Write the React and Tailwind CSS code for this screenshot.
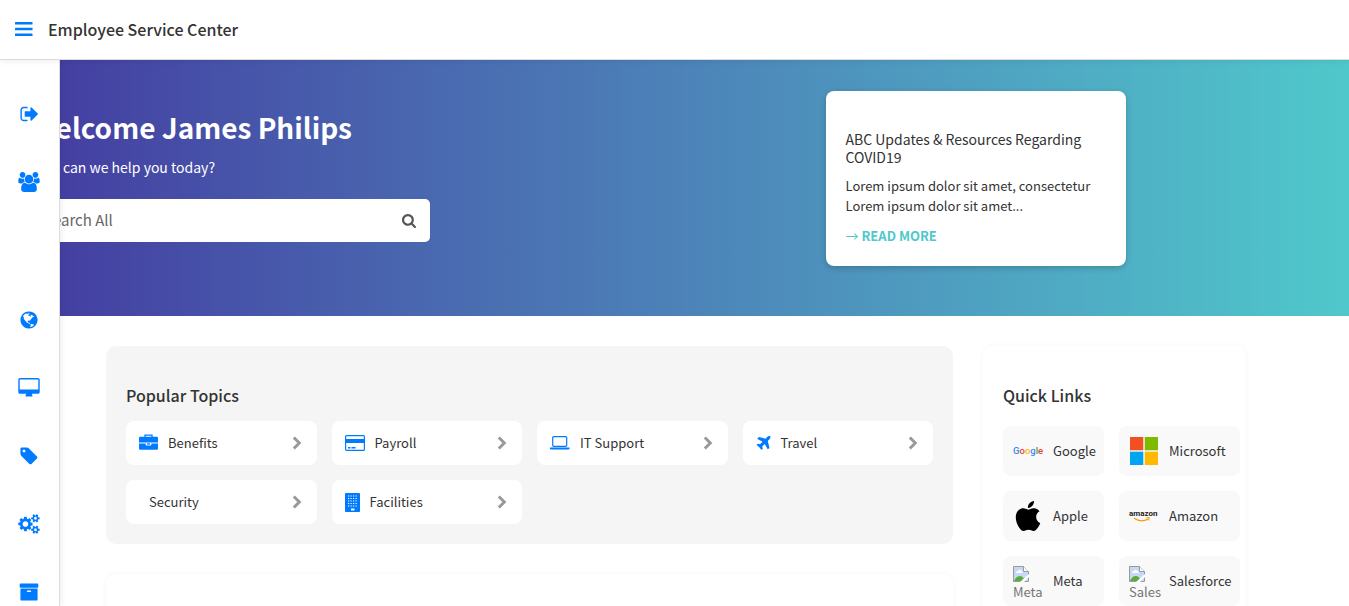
const F = {
  signOut: ["0 0 1664 1792", "M704 1440q0 4 1 20t.5 26.5-3 23.5-10 19.5-20.5 6.5h-320q-119 0-203.5-84.5t-84.5-203.5v-704q0-119 84.5-203.5t203.5-84.5h320q13 0 22.5 9.5t9.5 22.5q0 4 1 20t.5 26.5-3 23.5-10 19.5-20.5 6.5h-320q-66 0-113 47t-47 113v704q0 66 47 113t113 47h312l11.5 1 11.5 3 8 5.5 7 9 2 13.5zm928-544q0 26-19 45l-544 544q-19 19-45 19t-45-19-19-45v-288h-448q-26 0-45-19t-19-45v-384q0-26 19-45t45-19h448v-288q0-26 19-45t45-19 45 19l544 544q19 19 19 45z"],
  users: ["0 0 1920 1792", "M593 896q-162 5-265 128h-134q-82 0-138-40.5t-56-118.5q0-353 124-353 6 0 43.5 21t97.5 42.5 119 21.5q67 0 133-23-5 37-5 66 0 139 81 256zm1071 637q0 120-73 189.5t-194 69.5h-874q-121 0-194-69.5t-73-189.5q0-53 3.5-103.5t14-109 26.5-108.5 43-97.5 62-81 85.5-53.5 111.5-20q10 0 43 21.5t73 48 107 48 135 21.5 135-21.5 107-48 73-48 43-21.5q61 0 111.5 20t85.5 53.5 62 81 43 97.5 26.5 108.5 14 109 3.5 103.5zm-1024-1277q0 106-75 181t-181 75-181-75-75-181 75-181 181-75 181 75 75 181zm704 384q0 159-112.5 271.5t-271.5 112.5-271.5-112.5-112.5-271.5 112.5-271.5 271.5-112.5 271.5 112.5 112.5 271.5zm576 225q0 78-56 118.5t-138 40.5h-134q-103-123-265-128 81-117 81-256 0-29-5-66 66 23 133 23 59 0 119-21.5t97.5-42.5 43.5-21q124 0 124 353zm-128-609q0 106-75 181t-181 75-181-75-75-181 75-181 181-75 181 75 75 181z"],
  globe: ["128 0 1536 1792", "M896 128q209 0 385.5 103t279.5 279.5 103 385.5-103 385.5-279.5 279.5-385.5 103-385.5-103-279.5-279.5-103-385.5 103-385.5 279.5-279.5 385.5-103zm274 521q-2 1-9.5 9.5t-13.5 9.5q2 0 4.5-5t5-11 3.5-7q6-7 22-15 14-6 52-12 34-8 51 11-2-2 9.5-13t14.5-12q3-2 15-4.5t15-7.5l2-22q-12 1-17.5-7t-6.5-21q0 2-6 8 0-7-4.5-8t-11.5 1-9 1q-10-3-15-7.5t-8-16.5-4-15q-2-5-9.5-11t-9.5-10q-1-2-2.5-5.5t-3-6.5-4-5.5-5.5-2.5-7 5-7.5 10-4.5 5q-3-2-6-1.5t-4.5 1-4.5 3-5 3.5q-3 2-8.5 3t-8.5 2q15-5-1-11-10-4-16-3 9-4 7.5-12t-8.5-14h5q-1-4-8.5-8.5t-17.5-8.5-13-6q-8-5-34-9.5t-33-.5q-5 6-4.5 10.5t4 14 3.5 12.5q1 6-5.5 13t-6.5 12q0 7 14 15.5t10 21.5q-3 8-16 16t-16 12q-5 8-1.5 18.5t10.5 16.5q2 2 1.5 4t-3.5 4.5-5.5 4-6.5 3.5l-3 2q-11 5-20.5-6t-13.5-26q-7-25-16-30-23-8-29 1-5-13-41-26-25-9-58-4 6-1 0-15-7-15-19-12 3-6 4-17.5t1-13.5q3-13 12-23 1-1 7-8.5t9.5-13.5.5-6q35 4 50-11 5-5 11.5-17t10.5-17q9-6 14-5.5t14.5 5.5 14.5 5q14 1 15.5-11t-7.5-20q12 1 3-17-4-7-8-9-12-4-27 5-8 4 2 8-1-1-9.5 10.5t-16.5 17.5-16-5q-1-1-5.5-13.5t-9.5-13.5q-8 0-16 15 3-8-11-15t-24-8q19-12-8-27-7-4-20.5-5t-19.5 4q-5 7-5.5 11.5t5 8 10.5 5.5 11.5 4 8.5 3q14 10 8 14-2 1-8.5 3.5t-11.5 4.5-6 4q-3 4 0 14t-2 14q-5-5-9-17.5t-7-16.5q7 9-25 6l-10-1q-4 0-16 2t-20.5 1-13.5-8q-4-8 0-20 1-4 4-2-4-3-11-9.5t-10-8.5q-46 15-94 41 6 1 12-1 5-2 13-6.5t10-5.5q34-14 42-7l5-5q14 16 20 25-7-4-30-1-20 6-22 12 7 12 5 18-4-3-11.5-10t-14.5-11-15-5q-16 0-22 1-146 80-235 222 7 7 12 8 4 1 5 9t2.5 11 11.5-3q9 8 3 19 1-1 44 27 19 17 21 21 3 11-10 18-1-2-9-9t-9-4q-3 5 .5 18.5t10.5 12.5q-7 0-9.5 16t-2.5 35.5-1 23.5l2 1q-3 12 5.5 34.5t21.5 19.5q-13 3 20 43 6 8 8 9 3 2 12 7.5t15 10 10 10.5q4 5 10 22.5t14 23.5q-2 6 9.5 20t10.5 23q-1 0-2.5 1t-2.5 1q3 7 15.5 14t15.5 13q1 3 2 10t3 11 8 2q2-20-24-62-15-25-17-29-3-5-5.5-15.5t-4.5-14.5q2 0 6 1.5t8.5 3.5 7.5 4 2 3q-3 7 2 17.5t12 18.5 17 19 12 13q6 6 14 19.5t0 13.5q9 0 20 10.5t17 19.5q5 8 8 26t5 24q2 7 8.5 13.5t12.5 9.5l16 8 13 7q5 2 18.5 10.5t21.5 11.5q10 4 16 4t14.5-2.5 13.5-3.5q15-2 29 15t21 21q36 19 55 11-2 1 .5 7.5t8 15.5 9 14.5 5.5 8.5q5 6 18 15t18 15q6-4 7-9-3 8 7 20t18 10q14-3 14-32-31 15-49-18 0-1-2.5-5.5t-4-8.5-2.5-8.5 0-7.5 5-3q9 0 10-3.5t-2-12.5-4-13q-1-8-11-20t-12-15q-5 9-16 8t-16-9q0 1-1.5 5.5t-1.5 6.5q-13 0-15-1 1-3 2.5-17.5t3.5-22.5q1-4 5.5-12t7.5-14.5 4-12.5-4.5-9.5-17.5-2.5q-19 1-26 20-1 3-3 10.5t-5 11.5-9 7q-7 3-24 2t-24-5q-13-8-22.5-29t-9.5-37q0-10 2.5-26.5t3-25-5.5-24.5q3-2 9-9.5t10-10.5q2-1 4.5-1.5t4.5 0 4-1.5 3-6q-1-1-4-3-3-3-4-3 7 3 28.5-1.5t27.5 1.5q15 11 22-2 0-1-2.5-9.5t-.5-13.5q5 27 29 9 3 3 15.5 5t17.5 5q3 2 7 5.5t5.5 4.5 5-.5 8.5-6.5q10 14 12 24 11 40 19 44 7 3 11 2t4.5-9.5 0-14-1.5-12.5l-1-8v-18l-1-8q-15-3-18.5-12t1.5-18.5 15-18.5q1-1 8-3.5t15.5-6.5 12.5-8q21-19 15-35 7 0 11-9-1 0-5-3t-7.5-5-4.5-2q9-5 2-16 5-3 7.5-11t7.5-10q9 12 21 2 7-8 1-16 5-7 20.5-10.5t18.5-9.5q7 2 8-2t1-12 3-12q4-5 15-9t13-5l17-11q3-4 0-4 18 2 31-11 10-11-6-20 3-6-3-9.5t-15-5.5q3-1 11.5-.5t10.5-1.5q15-10-7-16-17-5-43 12zm-163 877q206-36 351-189-3-3-12.5-4.5t-12.5-3.5q-18-7-24-8 1-7-2.5-13t-8-9-12.5-8-11-7q-2-2-7-6t-7-5.5-7.5-4.5-8.5-2-10 1l-3 1q-3 1-5.5 2.5t-5.5 3-4 3 0 2.5q-21-17-36-22-5-1-11-5.5t-10.5-7-10-1.5-11.5 7q-5 5-6 15t-2 13q-7-5 0-17.5t2-18.5q-3-6-10.5-4.5t-12 4.5-11.5 8.5-9 6.5-8.5 5.5-8.5 7.5q-3 4-6 12t-5 11q-2-4-11.5-6.5t-9.5-5.5q2 10 4 35t5 38q7 31-12 48-27 25-29 40-4 22 12 26 0 7-8 20.5t-7 21.5q0 6 2 16z"],
  desktop: ["-64 0 1920 1792", "M1728 992v-832q0-13-9.5-22.5t-22.5-9.5h-1600q-13 0-22.5 9.5t-9.5 22.5v832q0 13 9.5 22.5t22.5 9.5h1600q13 0 22.5-9.5t9.5-22.5zm128-832v1088q0 66-47 113t-113 47h-544q0 37 16 77.5t32 71 16 43.5q0 26-19 45t-45 19h-512q-26 0-45-19t-19-45q0-14 16-44t32-70 16-78h-544q-66 0-113-47t-47-113v-1088q0-66 47-113t113-47h1600q66 0 113 47t47 113z"],
  tag: ["128 0 1536 1792", "M576 448q0-53-37.5-90.5t-90.5-37.5-90.5 37.5-37.5 90.5 37.5 90.5 90.5 37.5 90.5-37.5 37.5-90.5zm1067 576q0 53-37 90l-491 492q-39 37-91 37-53 0-90-37l-715-716q-38-37-64.5-101t-26.5-117v-416q0-52 38-90t90-38h416q53 0 117 26.5t102 64.5l715 714q37 39 37 91z"],
  cogs: ["-64 0 1920 1792", "M832 896q0-106-75-181t-181-75-181 75-75 181 75 181 181 75 181-75 75-181zm768 512q0-52-38-90t-90-38-90 38-38 90q0 53 37.5 90.5t90.5 37.5 90.5-37.5 37.5-90.5zm0-1024q0-52-38-90t-90-38-90 38-38 90q0 53 37.5 90.5t90.5 37.5 90.5-37.5 37.5-90.5zm-384 421v185q0 10-7 19.5t-16 10.5l-155 24q-11 35-32 76 34 48 90 115 7 11 7 20 0 12-7 19-23 30-82.5 89.5t-78.5 59.5q-11 0-21-7l-115-90q-37 19-77 31-11 108-23 155-7 24-30 24h-186q-11 0-20-7.5t-10-17.5l-23-153q-34-10-75-31l-118 89q-7 7-20 7-11 0-21-8-144-133-144-160 0-9 7-19 10-14 41-53t47-61q-23-44-35-82l-152-24q-10-1-17-9.5t-7-19.5v-185q0-10 7-19.5t16-10.5l155-24q11-35 32-76-34-48-90-115-7-11-7-20 0-12 7-20 22-30 82-89t79-59q11 0 21 7l115 90q34-18 77-32 11-108 23-154 7-24 30-24h186q11 0 20 7.5t10 17.5l23 153q34 10 75 31l118-89q8-7 20-7 11 0 21 8 144 133 144 160 0 8-7 19-12 16-42 54t-45 60q23 48 34 82l152 23q10 2 17 10.5t7 19.5zm640 533v140q0 16-149 31-12 27-30 52 51 113 51 138 0 4-4 7-122 71-124 71-8 0-46-47t-52-68q-20 2-30 2t-30-2q-14 21-52 68t-46 47q-2 0-124-71-4-3-4-7 0-25 51-138-18-25-30-52-149-15-149-31v-140q0-16 149-31 13-29 30-52-51-113-51-138 0-4 4-7 4-2 35-20t59-34 30-16q8 0 46 46.5t52 67.5q20-2 30-2t30 2q51-71 92-112l6-2q4 0 124 70 4 3 4 7 0 25-51 138 17 23 30 52 149 15 149 31zm0-1024v140q0 16-149 31-12 27-30 52 51 113 51 138 0 4-4 7-122 71-124 71-8 0-46-47t-52-68q-20 2-30 2t-30-2q-14 21-52 68t-46 47q-2 0-124-71-4-3-4-7 0-25 51-138-18-25-30-52-149-15-149-31v-140q0-16 149-31 13-29 30-52-51-113-51-138 0-4 4-7 4-2 35-20t59-34 30-16q8 0 46 46.5t52 67.5q20-2 30-2t30 2q51-71 92-112l6-2q4 0 124 70 4 3 4 7 0 25-51 138 17 23 30 52 149 15 149 31z"],
  archive: ["0 0 1792 1792", "M1088 832q0-26-19-45t-45-19h-256q-26 0-45 19t-19 45 19 45 45 19h256q26 0 45-19t19-45zm576-192v960q0 26-19 45t-45 19h-1408q-26 0-45-19t-19-45v-960q0-26 19-45t45-19h1408q26 0 45 19t19 45zm64-448v256q0 26-19 45t-45 19h-1536q-26 0-45-19t-19-45v-256q0-26 19-45t45-19h1536q26 0 45 19t19 45z"],
  search: ["64 128 1664 1664", "M1216 832q0-185-131.5-316.5t-316.5-131.5-316.5 131.5-131.5 316.5 131.5 316.5 316.5 131.5 316.5-131.5 131.5-316.5zm512 832q0 52-38 90t-90 38q-54 0-90-38l-343-342q-179 124-399 124-143 0-273.5-55.5t-225-150-150-225-55.5-273.5 55.5-273.5 150-225 225-150 273.5-55.5 273.5 55.5 225 150 150 225 55.5 273.5q0 220-124 399l343 343q37 37 37 90z"],
};

function Glyph({ name, className }) {
  return (
    <svg viewBox={F[name][0]} className={className} fill="currentColor" aria-hidden="true">
      <path d={F[name][1]} />
    </svg>
  );
}

const nav = [
  ["Sign out", "signOut"],
  ["People", "users"],
  ["", ""],
  ["Web", "globe"],
  ["Devices", "desktop"],
  ["Offers", "tag"],
  ["Settings", "cogs"],
  ["Archive", "archive"],
];

function BriefcaseIcon() {
  return (
    <svg viewBox="0 0 19 18" className="h-[18px] w-[19px] shrink-0" fill="none" aria-hidden="true">
      <path d="M6 3V1.200h7V3" stroke="#007bff" strokeWidth="1.300" />
      <path fill="#007bff" d="M1.200 2.800h16.600q1.200 0 1.200 1.200v4.500H0V4q0-1.200 1.200-1.200zM0 9.500h6.700v1.300q0 .8.800.8h4q.8 0 .8-.8V9.500H19v5q0 1.300-1.300 1.300H1.300Q0 15.800 0 14.500z" />
      <path fill="#007bff" d="M8 9.300h3v1.300H8z" />
    </svg>
  );
}
function CardIcon() {
  return (
    <svg viewBox="0 0 20 16" className="h-4 w-5 shrink-0" fill="none" aria-hidden="true">
      <rect x="0.6" y="0.6" width="18.8" height="14.8" rx="1" stroke="#007bff" strokeWidth="1.2" />
      <path fill="#007bff" d="M1 4h18v4H1zM3 12h2.500v1.400H3zM6.500 12h4v1.400h-4z" />
    </svg>
  );
}
function LaptopIcon() {
  return (
    <svg viewBox="0 0 20 14" className="h-3.5 w-5 shrink-0" fill="none" aria-hidden="true">
      <rect x="2.700" y="0.700" width="14" height="9.600" rx="1" stroke="#007bff" strokeWidth="1.200" />
      <path fill="#007bff" d="M0 11.500h19.500v0.700q0 1.300-1.300 1.300H1.300Q0 13.500 0 12.200z" />
    </svg>
  );
}
function PlaneIcon() {
  return (
    <svg viewBox="0 0 1408 1408" className="h-3.5 w-[15px] shrink-0" fill="#007bff" aria-hidden="true">
      <path d="M1380 28q44 60 16 148t-96 156l-161 161 160 696q5 19-12 33l-128 96q-7 6-19 6-4 0-7-1-15-3-21-16L833 799l-259 259 53 194q5 17-8 31l-96 96q-9 9-23 9h-2q-15-2-24-13l-189-252L33 934q-11-7-13-23-1-13 9-25l96-97q9-9 23-9 6 0 8 1l194 53 259-259-508-279q-14-8-17-24-2-16 9-27l128-128q14-13 30-8l665 159 160-160q68-68 156-96t148 16z" />
    </svg>
  );
}
function BuildingIcon() {
  return (
    <svg viewBox="0 0 15 19" className="h-[19px] w-[15px] shrink-0" aria-hidden="true">
      <rect width="15" height="19" rx="0.800" fill="#007bff" />
      <path fill="#fff" d="M6 15.500h3.500v2H6z" />
      {[3, 5.500, 8, 10.500, 13].map((y) => (
        <path key={y} d={`M3 ${y}h9.500`} stroke="#fff" strokeWidth="1.200" strokeDasharray="1.200 1.300" />
      ))}
    </svg>
  );
}
function Chevron() {
  return (
    <svg viewBox="0 0 10 14" className="ml-auto h-3.5 w-2.5 shrink-0" fill="none" aria-hidden="true">
      <path d="M1.800 1.500 7.300 7l-5.500 5.500" stroke="#999" strokeWidth="3" />
    </svg>
  );
}

const topics = [
  ["Benefits", <BriefcaseIcon key="i" />],
  ["Payroll", <CardIcon key="i" />],
  ["IT Support", <LaptopIcon key="i" />],
  ["Travel", <PlaneIcon key="i" />],
  ["Security", null],
  ["Facilities", <BuildingIcon key="i" />],
];

function GoogleLogo() {
  return (
    <svg viewBox="0 0 30 30" className="h-[30px] w-[30px] shrink-0 overflow-visible" aria-hidden="true">
      <text x="0" y="18" fontFamily="Roboto, sans-serif" fontSize="9.5" fontWeight="500">
        <tspan fill="#4285f4">G</tspan><tspan fill="#ea4335">o</tspan><tspan fill="#fbbc05">o</tspan><tspan fill="#4285f4">g</tspan><tspan fill="#34a853">l</tspan><tspan fill="#ea4335">e</tspan>
      </text>
    </svg>
  );
}
function MicrosoftLogo() {
  return (
    <svg viewBox="0 0 30 30" className="h-[30px] w-[30px] shrink-0" aria-hidden="true">
      <path fill="#f25022" d="M1 1h13.300v13.300H1z" />
      <path fill="#7fba00" d="M15.700 1H29v13.300H15.700z" />
      <path fill="#00a4ef" d="M1 15.700h13.300V29H1z" />
      <path fill="#ffb900" d="M15.700 15.700H29V29H15.700z" />
    </svg>
  );
}
function AppleLogo() {
  return (
    <svg viewBox="0 0 814 1000" className="h-[30px] w-[30px] shrink-0" aria-hidden="true">
      <path d="M788.100 340.900c-5.800 4.500-108.200 62.200-108.200 190.500 0 148.400 130.300 200.900 134.200 202.200-.6 3.200-20.700 71.900-68.700 141.900-42.800 61.600-87.500 123.100-155.500 123.100s-85.500-39.500-164-39.500c-76.500 0-103.700 40.800-165.900 40.800s-105.600-57-155.500-127C46.700 790.700 0 663 0 541.800c0-194.400 126.400-297.500 250.800-297.500 66.100 0 121.200 43.400 162.700 43.400 39.500 0 101.100-46 176.300-46 28.500 0 130.900 2.600 198.300 99.200zm-234-181.500c31.100-36.900 53.100-88.100 53.100-139.300 0-7.100-.6-14.300-1.900-20.100-50.600 1.900-110.800 33.700-147.100 75.800-28.500 32.400-55.100 83.600-55.100 135.500 0 7.800 1.300 15.600 1.900 18.100 3.200.6 8.400 1.300 13.600 1.300 45.400 0 102.500-30.400 135.500-71.300z" />
    </svg>
  );
}
function AmazonLogo() {
  return (
    <svg viewBox="0 0 30 30" className="h-[30px] w-[30px] shrink-0 overflow-visible" aria-hidden="true">
      <text x="0" y="15" fontFamily="Roboto, sans-serif" fontSize="8" fontWeight="700" fill="#222">amazon</text>
      <path d="M5 17.300q7 4.500 14 .8" fill="none" stroke="#f90" strokeWidth="1.200" />
      <path d="m17.300 16.800 3-.3-.7 3" fill="none" stroke="#f90" strokeWidth="1" />
    </svg>
  );
}
function MissingImage({ alt }) {
  return (
    <span className="flex h-[30px] w-[30px] shrink-0 flex-col">
      <svg viewBox="0 0 16 16" className="h-4 w-4 shrink-0" aria-hidden="true">
        <path d="M.5.5h10l5 5v10H.5z" fill="#c5d8f7" stroke="#9a9a9a" />
        <path d="M3 7q0-2 2-2 1-2 3-.5Q10 5 9.500 7z" fill="#fff" />
        <path d="M1 15q2-5 6-5 3 0 5 5z" fill="#5aad3b" />
        <path d="M10.500.5v5h5" fill="#fff" stroke="#9a9a9a" />
        <path d="M7 16 16 8v3l-5 5z" fill="#fff" />
      </svg>
      <span className="text-[13px] leading-5 text-[#757575]">{alt}</span>
    </span>
  );
}

const links = [
  ["Google", <GoogleLogo key="i" />],
  ["Microsoft", <MicrosoftLogo key="i" />],
  ["Apple", <AppleLogo key="i" />],
  ["Amazon", <AmazonLogo key="i" />],
  ["Meta", <MissingImage key="i" alt="Meta" />],
  ["Salesforce", <MissingImage key="i" alt="Sales" />],
];

export default function App() {
  return (
    <div className="h-screen overflow-hidden bg-white font-['Noto_Sans_CJK_JP','Noto_Sans_CJK_SC',sans-serif] text-[13px] text-[#333]">
      <header className="relative z-20 flex h-[60px] items-center gap-3.5 border-b border-[#ddd] bg-white px-3.5 pb-0.5 shadow-[0_2px_5px_rgba(0,0,0,0.06)]">
        <button type="button" aria-label="Menu" className="text-[#007bff]">
          <svg viewBox="0 0 20 14" className="h-3.5 w-5" fill="currentColor" aria-hidden="true">
            <rect x="1" width="17.500" height="2.600" rx="0.500" />
            <rect x="1" y="5.700" width="17.500" height="2.600" rx="0.500" />
            <rect x="1" y="11.400" width="17.500" height="2.600" rx="0.500" />
          </svg>
        </button>
        <h1 className="text-base font-medium">Employee Service Center</h1>
      </header>
      <div className="flex">
        <nav className="relative z-10 flex h-[calc(100vh-60px)] w-[60px] shrink-0 flex-col border-r border-[#ddd] bg-white pt-5 pr-px shadow-[2px_0_5px_rgba(0,0,0,0.06)]">
          {nav.map(([label, icon], i) =>
            icon ? (
              <a key={i} href="#" aria-label={label} className="flex h-[68px] shrink-0 items-center justify-center text-[#007bff]">
                <Glyph name={icon} className="h-5 w-[22px]" />
              </a>
            ) : (
              <div key={i} className="h-[70px] shrink-0" />
            )
          )}
        </nav>
        <main className="-ml-[60px] min-w-0 flex-1">
          <section className="flex h-[256px] bg-linear-to-r from-[#4338a0] to-[#4fc8cb] pl-[30px]">
            <div className="w-[400px] shrink-0 pt-[45px] text-white">
              <h2 className="text-[28px] leading-[44px] font-bold">Welcome James Philips</h2>
              <p className="mt-2 text-sm leading-5">How can we help you today?</p>
              <label className="mt-[22px] flex h-[43px] items-center rounded-[5px] bg-white px-3.5 text-[#555]">
                <input aria-label="Search All" placeholder="Search All" className="min-w-0 flex-1 bg-transparent text-[15px] outline-none placeholder:text-[#666]" />
                <Glyph name="search" className="h-3.5 w-3.5" />
              </label>
            </div>
            <div className="flex flex-1 justify-center pt-[31px]">
              <article className="ml-[172px] h-[175px] w-[300px] rounded-lg bg-white px-5 pt-[39px] shadow-[0_2px_6px_rgba(0,0,0,0.2)]">
                <h3 className="text-sm leading-[18px]">ABC Updates &amp; Resources Regarding COVID19</h3>
                <p className="mt-2.5 leading-5">Lorem ipsum dolor sit amet, consectetur Lorem ipsum dolor sit amet...</p>
                <a href="#" className="mt-2.5 block leading-5 font-bold text-[#4fc8cb]"><span className="font-normal">→</span> READ MORE</a>
              </article>
            </div>
          </section>
          <div className="flex gap-[30px] pt-[30px] pr-[103px] pl-[106px]">
            <div className="min-w-0 flex-1">
              <section className="rounded-[10px] bg-[#f5f5f5] px-5 pt-[35px] pb-5">
                <h2 className="text-base leading-7 font-medium">Popular Topics</h2>
                <div className="mt-3 grid grid-cols-4 gap-[15px]">
                  {topics.map(([name, icon]) => (
                    <a key={name} href="#" className="flex h-11 items-center rounded-lg bg-white pr-[15px] pl-[13px]">
                      {icon}
                      <span className="ml-2.5">{name}</span>
                      <Chevron />
                    </a>
                  ))}
                </div>
              </section>
              <section className="mt-[30px] h-20 rounded-[10px] bg-white shadow-[0_0_6px_rgba(0,0,0,0.04)]" />
            </div>
            <section className="w-[263px] shrink-0 rounded-[10px] bg-white px-5 pt-[35px] shadow-[0_0_6px_rgba(0,0,0,0.04)]">
              <h2 className="text-base leading-7 font-medium">Quick Links</h2>
              <div className="mt-[17px] grid grid-cols-[101px_121px] gap-[15px]">
                {links.map(([name, logo]) => (
                  <a key={name} href="#" className="flex h-[50px] items-center gap-2.5 rounded-lg bg-[#f9f9f9] px-2.5">
                    {logo}
                    <span>{name}</span>
                  </a>
                ))}
              </div>
            </section>
          </div>
        </main>
      </div>
    </div>
  );
}
